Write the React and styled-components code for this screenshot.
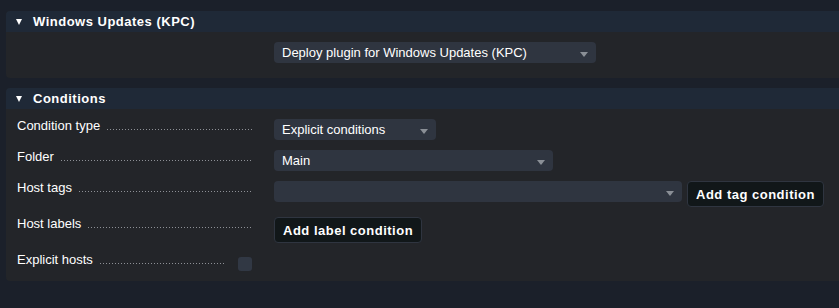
import * as React from "react"
import styled, { createGlobalStyle } from "styled-components"

const GlobalStyle = createGlobalStyle`
  html, body {
    margin: 0;
    padding: 0;
    background: #1b202a;
  }
  body {
    font-family: "Liberation Sans", Arial, sans-serif;
    font-size: 13px;
    color: #fff;
  }
`

const Page = styled.div`
  padding: 11px 0 0 6px;
  height: 308px;
  box-sizing: border-box;
  display: flex;
  flex-direction: column;
  gap: 10px;
`

const Section = styled.div`
  background: #232529;
  border-radius: 4px 0 0 4px;
  overflow: hidden;
`

const SectionHeader = styled.div`
  display: flex;
  align-items: center;
  height: 21px;
  background: #1f2937;
  padding-left: 10px;
  font-weight: bold;
  letter-spacing: 0.5px;
  gap: 11px;
`

const Caret = styled.span`
  width: 0;
  height: 0;
  border-left: 3.5px solid transparent;
  border-right: 3.5px solid transparent;
  border-top: 6px solid #fff;
  margin-top: 1px;
`

const SectionBody = styled.div`
  display: flex;
  flex-direction: column;
  gap: 10px;
  padding: ${(p) => p.$padding || "10px 0 10px 11px"};
`

const Row = styled.div`
  display: flex;
  align-items: flex-start;
`

const Label = styled.div`
  display: flex;
  align-items: flex-end;
  width: ${(p) => p.$width || 236}px;
  margin-top: -1px;
  margin-right: ${(p) => p.$gap || 21}px;
  white-space: nowrap;
  line-height: 15px;
`

const Leader = styled.span`
  flex: 1;
  height: 1px;
  margin: 0 0 3px 7px;
  background-image: linear-gradient(to right, #8d9096 1px, transparent 1px);
  background-size: 3px 1px;
  background-repeat: repeat-x;
`

const Select = styled.div`
  display: flex;
  align-items: center;
  justify-content: space-between;
  box-sizing: border-box;
  width: ${(p) => p.$width}px;
  height: 21px;
  padding: 0 8px;
  background: #2f3540;
  border-radius: 4px;
  white-space: nowrap;
`

const Arrow = styled.span`
  width: 0;
  height: 0;
  border-left: 4px solid transparent;
  border-right: 4px solid transparent;
  border-top: 5px solid #8a8f96;
  margin-top: 3px;
`

const Controls = styled.div`
  display: flex;
  align-items: flex-start;
  gap: 5px;
`

const Button = styled.button`
  height: 26px;
  padding: 0 8px;
  background: #111719;
  border: 1px solid #2f3540;
  border-radius: 4px;
  color: #fff;
  font-family: "Liberation Sans", Arial, sans-serif;
  font-size: 13px;
  font-weight: bold;
  letter-spacing: 0.5px;
  white-space: nowrap;
`

const Checkbox = styled.span`
  display: block;
  width: 14px;
  height: 14px;
  margin-top: 4px;
  background: #313844;
  border-radius: 3px;
`

const SelectBox = ({ width, children }) => (
  <Select $width={width}>
    <span>{children}</span>
    <Arrow />
  </Select>
)

const Field = ({ label, width, gap, children }) => (
  <Row>
    <Label $width={width} $gap={gap}>
      {label}
      <Leader />
    </Label>
    {children}
  </Row>
)

export default function App() {
  return (
    <>
      <GlobalStyle />
      <Page>
        <Section>
          <SectionHeader>
            <Caret />
            Windows Updates (KPC)
          </SectionHeader>
          <SectionBody $padding="10px 0 15px 268px">
            <SelectBox width={322}>Deploy plugin for Windows Updates (KPC)</SelectBox>
          </SectionBody>
        </Section>
        <Section>
          <SectionHeader>
            <Caret />
            Conditions
          </SectionHeader>
          <SectionBody $padding="10px 0 10px 11px">
            <Field label="Condition type">
              <SelectBox width={162}>Explicit conditions</SelectBox>
            </Field>
            <Field label="Folder">
              <SelectBox width={279}>Main</SelectBox>
            </Field>
            <Field label="Host tags">
              <Controls>
                <SelectBox width={408} />
                <Button>Add tag condition</Button>
              </Controls>
            </Field>
            <Field label="Host labels">
              <Button>Add label condition</Button>
            </Field>
            <Field label="Explicit hosts" width={208} gap={13}>
              <Checkbox />
            </Field>
          </SectionBody>
        </Section>
      </Page>
    </>
  )
}
